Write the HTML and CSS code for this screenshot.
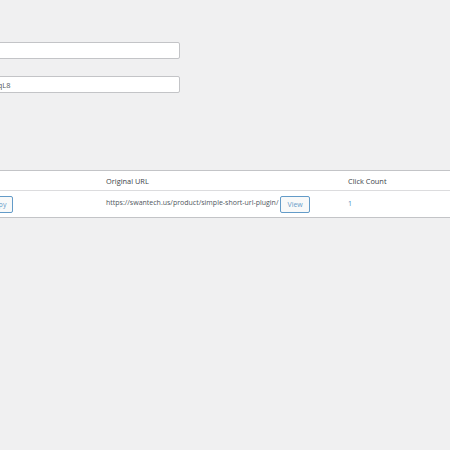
FILE: index.html
```html
<!DOCTYPE html>
<html>
<head>
<meta charset="utf-8">
<link rel="stylesheet" href="styles.css">
</head>
<body>
<div class="wrap">
  <div class="form">
    <div class="field"><input class="text" type="text" value=""></div>
    <div class="field"><input class="text" type="text" value="https://swantech.us/?qL8"></div>
  </div>
  <table class="list">
    <thead>
      <tr><th class="c1">Short URL</th><th class="c2">Original URL</th><th class="c3">Click Count</th></tr>
    </thead>
    <tbody>
      <tr>
        <td class="c1"><span class="short">https://swantech.us/?qL8</span><button class="btn">Copy</button></td>
        <td class="c2"><span class="orig">https://swantech.us/product/simple-short-url-plugin/</span><button class="btn">View</button></td>
        <td class="c3"><span class="count">1</span></td>
      </tr>
    </tbody>
  </table>
</div>
</body>
</html>
```
FILE: styles.css
```css
html, body {
  margin: 0;
  padding: 0;
  background: #f0f0f1;
  overflow: hidden;
  width: 450px;
  height: 450px;
}
body {
  font-family: "Open Sans", "Noto Sans", sans-serif;
  font-size: 7px;
  color: #3c434a;
}
.wrap {
  margin-left: -150px;
  width: 620px;
}
.form {
  padding-top: 42px;
  display: flex;
  flex-direction: column;
  gap: 17px;
}
.field {
  display: flex;
}
.text {
  box-sizing: border-box;
  width: 330px;
  height: 17px;
  border: 1px solid #c3c4c7;
  border-radius: 2px;
  background: #fff;
  font-family: inherit;
  font-size: 7.4px;
  color: #50575e;
  padding: 0 4px 0 73px;
  margin: 0;
  outline: none;
}
.list {
  margin-top: 77px;
  width: 620px;
  border-collapse: collapse;
  background: #fff;
  border: 1px solid #c3c4c7;
  table-layout: fixed;
}
.list th, .list td {
  text-align: left;
  font-weight: normal;
  padding: 0 6px;
  white-space: nowrap;
}
.list th {
  height: 19px;
  color: #3c434a;
  border-bottom: 1px solid #dcdcde;
  font-size: 7.4px;
}
.list td {
  height: 26px;
  color: #50575e;
}
.c1 { width: 237px; }
.c2 { width: 230px; }
.short {
  display: inline-block;
  width: 124px;
  overflow: hidden;
  vertical-align: middle;
}
.btn {
  font-family: inherit;
  font-size: 7px;
  color: #2271b1;
  background: #f6f7f7;
  border: 1px solid #2271b1;
  border-radius: 2px;
  height: 17px;
  padding: 0 6px;
  margin: 0 0 0 2px;
  vertical-align: middle;
  opacity: 0.7;
}
.orig { vertical-align: middle; position: relative; top: -2px; }
.count { color: #2271b1; opacity: 0.8; position: relative; top: -1px; }
```
